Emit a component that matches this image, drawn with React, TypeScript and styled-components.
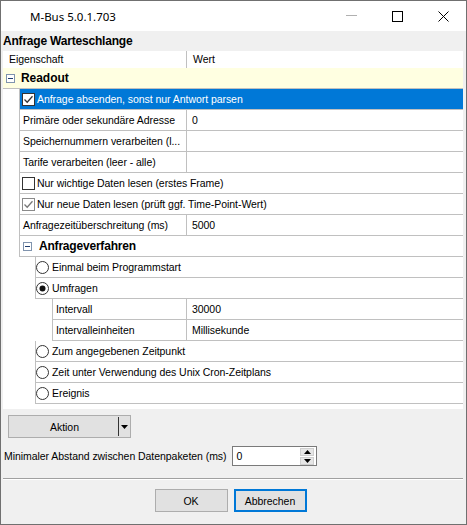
import React from 'react';
import styled, { createGlobalStyle } from 'styled-components';

const GlobalStyle = createGlobalStyle`
  body {
    margin: 0;
    background: #fff;
  }
  * {
    box-sizing: border-box;
  }
`;

const LINE = '#c0c0c0';
// grid-x of the column divider between label and value
const DIVIDER = 183;

const Window = styled.div`
  width: 467px;
  height: 525px;
  border: 1px solid #707070;
  background: #f0f0f0;
  display: flex;
  flex-direction: column;
  font-family: 'Liberation Sans', Arial, sans-serif;
  font-size: 10.5px;
  letter-spacing: -0.05px;
  color: #000;
  overflow: hidden;
`;

const TitleBar = styled.div`
  height: 30px;
  flex: 0 0 30px;
  background: #fff;
  display: flex;
  align-items: center;
`;

const TitleText = styled.div`
  padding-left: 29px;
  font-family: 'Noto Sans', 'Liberation Sans', sans-serif;
  font-size: 11.5px;
  letter-spacing: 0;
  flex: 1;
`;

const CaptionButton = styled.div`
  width: 46px;
  height: 30px;
  display: flex;
  align-items: center;
  justify-content: center;
`;

const GridTitle = styled.div`
  height: 20px;
  line-height: 20px;
  padding-left: 2px;
  font-size: 12px;
  font-weight: bold;
  letter-spacing: -0.2px;
`;

const Grid = styled.div`
  margin: 0 3px 0 2px;
  height: 358px;
  background: #fff;
  display: flex;
  flex-direction: column;
`;

const HeaderRow = styled.div`
  display: flex;
  height: 17px;
  line-height: 17px;
`;

const HeaderLabel = styled.div`
  width: ${DIVIDER}px;
  padding-left: 6px;
`;

const HeaderValue = styled.div`
  flex: 1;
  border-left: 1px solid ${LINE};
  padding-left: 6px;
`;

const CategoryRow = styled.div`
  height: 21px;
  display: flex;
  align-items: center;
  background: #ffffe1;
  border-bottom: 1px solid ${LINE};
  padding-left: 3px;
  font-size: 12px;
  font-weight: bold;
`;

const CategoryText = styled.span`
  margin-left: 6px;
`;

const Row = styled.div`
  display: flex;
  height: 21px;
  flex: 0 0 21px;
`;

const Gutter = styled.div<{ $w: number }>`
  flex: 0 0 ${(p) => p.$w}px;
`;

const Cell = styled.div<{ $selected?: boolean }>`
  flex: 1;
  display: flex;
  align-items: center;
  border-left: 1px solid ${LINE};
  border-bottom: 1px solid ${LINE};
  background: ${(p) => (p.$selected ? '#0078d7' : '#fff')};
  color: ${(p) => (p.$selected ? '#fff' : '#000')};
  white-space: nowrap;
  overflow: hidden;
`;

const LabelCell = styled.div<{ $w: number }>`
  width: ${(p) => p.$w}px;
  height: 100%;
  padding-left: 3px;
  display: flex;
  align-items: center;
  overflow: hidden;
`;

const ValueCell = styled.div`
  flex: 1;
  height: 100%;
  border-left: 1px solid ${LINE};
  padding-left: 5px;
  display: flex;
  align-items: center;
`;

const SubCategoryText = styled.span`
  margin-left: 5px;
  font-size: 12px;
  font-weight: bold;
  letter-spacing: -0.2px;
`;

const BoxWrap = styled.span<{ $ml: number }>`
  display: inline-flex;
  margin-left: ${(p) => p.$ml}px;
  margin-right: 2px;
`;

const RadioText = styled.span`
  margin-left: 1px;
`;

const Footer = styled.div`
  display: flex;
  flex-direction: column;
  padding: 0 3px 0 2px;
`;

const SplitButton = styled.div`
  margin: 6px 0 0 5px;
  width: 123px;
  height: 23px;
  border: 1px solid #adadad;
  background: #e1e1e1;
  display: flex;
  align-items: center;
`;

const SplitMain = styled.div`
  flex: 1;
  text-align: center;
  padding-left: 2px;
`;

const SplitArrow = styled.div`
  width: 12px;
  height: 19px;
  border-left: 1px solid #333;
  display: flex;
  align-items: center;
  justify-content: center;
`;

const FieldRow = styled.div`
  margin-top: 8px;
  display: flex;
  align-items: center;
  height: 20px;
`;

const FieldLabel = styled.div`
  margin-left: 1px;
`;

const NumberBox = styled.div`
  margin-left: 6px;
  width: 85px;
  height: 20px;
  border: 1px solid #7a7a7a;
  background: #fff;
  display: flex;
  align-items: center;
  padding-left: 3px;
`;

const NumberValue = styled.div`
  flex: 1;
`;

const Spin = styled.div`
  width: 14px;
  margin-right: 2px;
  display: flex;
  flex-direction: column;
  gap: 1px;
`;

const SpinPart = styled.div`
  height: 8px;
  background: #e6e6e6;
  border: 1px solid #cfcfcf;
  display: flex;
  align-items: center;
  justify-content: center;
`;

const Separator = styled.div`
  margin-top: 12px;
  height: 2px;
  border-top: 1px solid #a0a0a0;
  border-bottom: 1px solid #fff;
`;

const ButtonRow = styled.div`
  margin-top: 9px;
  display: flex;
  justify-content: center;
  gap: 6px;
  padding-right: 5px;
`;

const DialogButton = styled.div<{ $default?: boolean }>`
  width: 73px;
  height: 23px;
  background: #e1e1e1;
  border: ${(p) => (p.$default ? '2px solid #0078d7' : '1px solid #adadad')};
  display: flex;
  align-items: center;
  justify-content: center;
`;

const ExpandBox: React.FC = () => (
  <svg width="9" height="9" viewBox="0 0 9 9">
    <rect x="0.5" y="0.5" width="8" height="8" fill="#fff" stroke="#8094ae" />
    <line x1="2" y1="4.5" x2="7" y2="4.5" stroke="#1f3d6e" />
  </svg>
);

const CheckBox: React.FC<{ checked: boolean; muted?: boolean }> = ({ checked, muted }) => (
  <svg width="13" height="13" viewBox="0 0 13 13">
    <rect x="0.5" y="0.5" width="12" height="12" fill="#fff" stroke={muted ? '#8a8a8a' : '#333'} />
    {checked && (
      <path d="M2.5 6.5 L5.2 9.2 L10.5 3.3" fill="none" stroke={muted ? '#777' : '#333'} strokeWidth="1.3" />
    )}
  </svg>
);

const Radio: React.FC<{ checked: boolean }> = ({ checked }) => (
  <svg width="13" height="13" viewBox="0 0 13 13">
    <circle cx="6.5" cy="6.5" r="6" fill="#fff" stroke="#333" />
    {checked && <circle cx="6.5" cy="6.5" r="3" fill="#111" />}
  </svg>
);

type RowDef =
  | { kind: 'prop'; indent: number; label: string; value?: string }
  | { kind: 'check'; indent: number; label: string; checked: boolean; muted?: boolean; selected?: boolean }
  | { kind: 'radio'; indent: number; label: string; checked: boolean }
  | { kind: 'cat'; indent: number; label: string };

const rows: RowDef[] = [
  { kind: 'check', indent: 16, label: 'Anfrage absenden, sonst nur Antwort parsen', checked: true, selected: true },
  { kind: 'prop', indent: 16, label: 'Primäre oder sekundäre Adresse', value: '0' },
  { kind: 'prop', indent: 16, label: 'Speichernummern verarbeiten (l...' },
  { kind: 'prop', indent: 16, label: 'Tarife verarbeiten (leer - alle)' },
  { kind: 'check', indent: 16, label: 'Nur wichtige Daten lesen (erstes Frame)', checked: false },
  { kind: 'check', indent: 16, label: 'Nur neue Daten lesen (prüft ggf. Time-Point-Wert)', checked: true, muted: true },
  { kind: 'prop', indent: 16, label: 'Anfragezeitüberschreitung (ms)', value: '5000' },
  { kind: 'cat', indent: 16, label: 'Anfrageverfahren' },
  { kind: 'radio', indent: 32, label: 'Einmal beim Programmstart', checked: false },
  { kind: 'radio', indent: 32, label: 'Umfragen', checked: true },
  { kind: 'prop', indent: 49, label: 'Intervall', value: '30000' },
  { kind: 'prop', indent: 49, label: 'Intervalleinheiten', value: 'Millisekunde' },
  { kind: 'radio', indent: 32, label: 'Zum angegebenen Zeitpunkt', checked: false },
  { kind: 'radio', indent: 32, label: 'Zeit unter Verwendung des Unix Cron-Zeitplans', checked: false },
  { kind: 'radio', indent: 32, label: 'Ereignis', checked: false },
];

const PropertyRow: React.FC<{ row: RowDef }> = ({ row }) => {
  let content: React.ReactNode;
  switch (row.kind) {
    case 'prop':
      content = (
        <>
          <LabelCell $w={DIVIDER - row.indent - 1}>{row.label}</LabelCell>
          <ValueCell>{row.value}</ValueCell>
        </>
      );
      break;
    case 'check':
      content = (
        <>
          <BoxWrap $ml={2}>
            <CheckBox checked={row.checked} muted={row.muted} />
          </BoxWrap>
          {row.label}
        </>
      );
      break;
    case 'radio':
      content = (
        <>
          <BoxWrap $ml={0}>
            <Radio checked={row.checked} />
          </BoxWrap>
          <RadioText>{row.label}</RadioText>
        </>
      );
      break;
    case 'cat':
      content = (
        <>
          <BoxWrap $ml={3}>
            <ExpandBox />
          </BoxWrap>
          <SubCategoryText>{row.label}</SubCategoryText>
        </>
      );
      break;
  }
  return (
    <Row>
      <Gutter $w={row.indent} />
      <Cell $selected={row.kind === 'check' && row.selected}>{content}</Cell>
    </Row>
  );
};

const App: React.FC = () => (
  <>
    <GlobalStyle />
    <Window>
      <TitleBar>
        <TitleText>M-Bus 5.0.1.703</TitleText>
        <CaptionButton>
          <svg width="11" height="2" viewBox="0 0 11 2">
            <line x1="0" y1="0.5" x2="11" y2="0.5" stroke="#b0b0b0" />
          </svg>
        </CaptionButton>
        <CaptionButton>
          <svg width="11" height="11" viewBox="0 0 11 11">
            <rect x="0.5" y="0.5" width="10" height="10" fill="none" stroke="#000" />
          </svg>
        </CaptionButton>
        <CaptionButton>
          <svg width="11" height="11" viewBox="0 0 11 11">
            <path d="M0.5 0.5 L10.5 10.5 M10.5 0.5 L0.5 10.5" stroke="#000" />
          </svg>
        </CaptionButton>
      </TitleBar>

      <GridTitle>Anfrage Warteschlange</GridTitle>
      <Grid>
        <HeaderRow>
          <HeaderLabel>Eigenschaft</HeaderLabel>
          <HeaderValue>Wert</HeaderValue>
        </HeaderRow>
        <CategoryRow>
          <ExpandBox />
          <CategoryText>Readout</CategoryText>
        </CategoryRow>
        {rows.map((row, i) => (
          <PropertyRow row={row} key={i} />
        ))}
      </Grid>

      <Footer>
        <SplitButton>
          <SplitMain>Aktion</SplitMain>
          <SplitArrow>
            <svg width="7" height="4" viewBox="0 0 7 4">
              <path d="M0 0 L7 0 L3.5 4 Z" fill="#000" />
            </svg>
          </SplitArrow>
        </SplitButton>

        <FieldRow>
          <FieldLabel>Minimaler Abstand zwischen Datenpaketen (ms)</FieldLabel>
          <NumberBox>
            <NumberValue>0</NumberValue>
            <Spin>
              <SpinPart>
                <svg width="7" height="4" viewBox="0 0 7 4">
                  <path d="M0 4 L7 4 L3.5 0 Z" fill="#000" />
                </svg>
              </SpinPart>
              <SpinPart>
                <svg width="7" height="4" viewBox="0 0 7 4">
                  <path d="M0 0 L7 0 L3.5 4 Z" fill="#000" />
                </svg>
              </SpinPart>
            </Spin>
          </NumberBox>
        </FieldRow>

        <Separator />

        <ButtonRow>
          <DialogButton>OK</DialogButton>
          <DialogButton $default>Abbrechen</DialogButton>
        </ButtonRow>
      </Footer>
    </Window>
  </>
);

export default App;
